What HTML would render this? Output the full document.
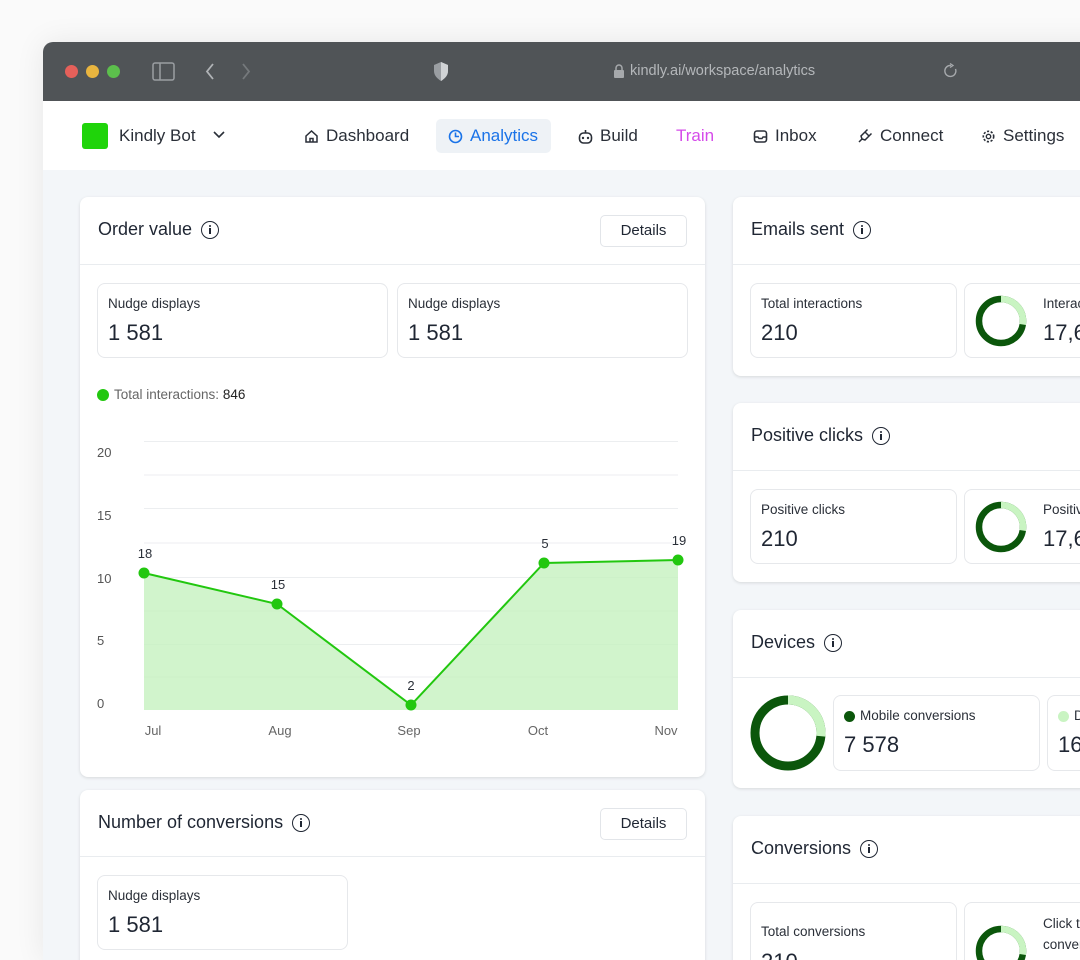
<!DOCTYPE html>
<html><head><meta charset="utf-8"><style>
*{box-sizing:border-box;margin:0;padding:0}
html{width:1080px;height:960px;overflow:hidden}
body{width:1080px;height:960px;overflow:hidden;background:#fafafa;font-family:"Liberation Sans",sans-serif;color:#1f2633;position:relative}
.win{position:absolute;left:43px;top:42px;width:1100px;height:918px;border-radius:10px 0 0 0;overflow:hidden;background:#f3f6f9;box-shadow:0 0 30px rgba(0,0,0,.08)}
.tb{position:absolute;left:0;top:0;right:0;height:59px;background:#505457}
.dot{position:absolute;top:23px;width:13px;height:13px;border-radius:50%}
.nav{position:absolute;left:0;top:59px;right:0;height:69px;background:#fff}
.ni{position:absolute;top:25px;font-size:17px;color:#2a2f38;display:flex;align-items:center;gap:7px}
.card{position:absolute;background:#fff;border-radius:8px;box-shadow:0 1px 3px rgba(0,0,0,.12)}
.ch{height:68px;border-bottom:1px solid #e9ecef;position:relative}
.ct{position:absolute;left:18px;top:22px;font-size:18px;color:#1f2633;display:flex;align-items:center;gap:9px}
.info{width:18px;height:18px;border:1.6px solid #1f2633;border-radius:50%;position:relative;display:inline-block}
.info:before{content:"";position:absolute;left:6.6px;top:3px;width:2px;height:2px;background:#1f2633;border-radius:1px}
.info:after{content:"";position:absolute;left:6.6px;top:6.5px;width:2px;height:6px;background:#1f2633}
.btn{position:absolute;right:18px;top:18px;width:87px;height:32px;border:1px solid #e2e5e9;border-radius:5px;font-size:15px;text-align:center;line-height:30px}
.st{position:absolute;border:1px solid #e6e8eb;border-radius:8px;background:#fff;overflow:hidden}
.sl{position:absolute;left:10px;top:12px;font-size:13.5px;color:#2a2f38}
.sv{position:absolute;left:10px;top:36px;font-size:22px;color:#1f2633}
</style></head><body>
<div class="win">
 <div class="tb">
  <div class="dot" style="left:22px;background:#e5605a"></div>
  <div class="dot" style="left:43px;background:#e9b53f"></div>
  <div class="dot" style="left:64px;background:#5cbf4c"></div>
  <svg style="position:absolute;left:109px;top:20px" width="24" height="19" viewBox="0 0 24 19"><rect x="1" y="1" width="21" height="17" rx="2" fill="none" stroke="#9a9ea2" stroke-width="1.5"/><line x1="8" y1="1" x2="8" y2="18" stroke="#9a9ea2" stroke-width="1.5"/></svg>
  <svg style="position:absolute;left:161px;top:20px" width="12" height="19"><path d="M9 2 L3 9.5 L9 17" fill="none" stroke="#b0b3b6" stroke-width="1.8"/></svg>
  <svg style="position:absolute;left:197px;top:20px" width="12" height="19"><path d="M3 2 L9 9.5 L3 17" fill="none" stroke="#75797c" stroke-width="1.8"/></svg>
  <svg style="position:absolute;left:389px;top:19px" width="18" height="21"><path d="M9 1 L16 4 V10 C16 15 12 18 9 20 C6 18 2 15 2 10 V4 Z" fill="#9a9ea2"/><path d="M9 1 L16 4 V10 C16 15 12 18 9 20 Z" fill="#d0d3d5"/></svg>
  <svg style="position:absolute;left:570px;top:22px" width="12" height="14"><rect x="1" y="6" width="10" height="8" rx="1" fill="#a6a9ac"/><path d="M3 6 V4 a3 3 0 0 1 6 0 V6" fill="none" stroke="#a6a9ac" stroke-width="1.5"/></svg>
  <div style="position:absolute;left:587px;top:21px;font-size:14.5px;color:#b4b7ba">kindly.ai/workspace/analytics</div>
  <svg style="position:absolute;left:900px;top:21px" width="16" height="16"><path d="M12.5 6 A5.5 5.5 0 1 1 8 2.5" fill="none" stroke="#a6a9ac" stroke-width="1.4"/><path d="M7 0.5 L10 2.5 L7 4.5" fill="none" stroke="#a6a9ac" stroke-width="1.3"/></svg>
 </div>
 <div class="nav">
  <div style="position:absolute;left:39px;top:22px;width:26px;height:26px;border-radius:3px;background:#1fd40a"></div>
  <div style="position:absolute;left:76px;top:25px;font-size:17px;color:#2a2f38">Kindly Bot</div>
  <svg style="position:absolute;left:170px;top:30px" width="12" height="8"><path d="M1 1 L6 6 L11 1" fill="none" stroke="#2a2f38" stroke-width="1.6"/></svg>
  <div class="ni" style="left:261px"><svg width="15" height="15"><path d="M2 7 L7.5 2 L13 7 V13 H2 Z M6 13 V9.5 H9 V13" fill="none" stroke="#2a2f38" stroke-width="1.5"/></svg>Dashboard</div>
  <div style="position:absolute;left:393px;top:18px;width:115px;height:34px;border-radius:5px;background:#eef2f6"></div>
  <div class="ni" style="left:405px;color:#1a73e8"><svg width="15" height="15"><circle cx="7.5" cy="7.5" r="6" fill="none" stroke="#1a73e8" stroke-width="1.6"/><path d="M7.5 3.5 V7.5 H11" fill="none" stroke="#1a73e8" stroke-width="1.6"/></svg>Analytics</div>
  <div class="ni" style="left:535px"><svg width="15" height="15"><rect x="1.5" y="4" width="12" height="10" rx="4" fill="none" stroke="#2a2f38" stroke-width="1.6"/><line x1="7.5" y1="1" x2="7.5" y2="4" stroke="#2a2f38" stroke-width="1.6"/><circle cx="5" cy="9" r="1.2" fill="#2a2f38"/><circle cx="10" cy="9" r="1.2" fill="#2a2f38"/></svg>Build</div>
  <div class="ni" style="left:633px;color:#d54bea">Train</div>
  <div class="ni" style="left:710px"><svg width="15" height="15"><rect x="1.5" y="2" width="12" height="11" rx="2.5" fill="none" stroke="#2a2f38" stroke-width="1.6"/><path d="M1.5 8 H5 L6 9.5 H9 L10 8 H13.5" fill="none" stroke="#2a2f38" stroke-width="1.4"/></svg>Inbox</div>
  <div class="ni" style="left:814px"><svg width="16" height="16"><path d="M2 14 L5 11 M5 11 L4 8 L8 4 L12 8 L8 12 Z M8 4 L10.5 1.5 M12 8 L14.5 5.5" fill="none" stroke="#2a2f38" stroke-width="1.5"/></svg>Connect</div>
  <div class="ni" style="left:938px"><svg width="15" height="15"><circle cx="7.5" cy="7.5" r="5.2" fill="none" stroke="#2a2f38" stroke-width="1.6" stroke-dasharray="2.2 1.6"/><circle cx="7.5" cy="7.5" r="2.2" fill="none" stroke="#2a2f38" stroke-width="1.4"/></svg>Settings</div>
 </div>
</div>

<div class="card" style="left:80px;top:197px;width:625px;height:580px">
 <div class="ch"><div class="ct">Order value <span class="info"></span></div><div class="btn">Details</div></div>
 <div class="st" style="left:17px;top:86px;width:291px;height:75px"><div class="sl">Nudge displays</div><div class="sv">1 581</div></div>
 <div class="st" style="left:317px;top:86px;width:291px;height:75px"><div class="sl">Nudge displays</div><div class="sv">1 581</div></div>
 <div style="position:absolute;left:17px;top:192px;width:12px;height:12px;border-radius:50%;background:#22c70f"></div>
 <div style="position:absolute;left:34px;top:190px;font-size:13.5px;color:#666">Total interactions: <span style="color:#222">846</span></div>
</div>
<svg style="position:absolute;left:0;top:0" width="1080" height="960">
 <g stroke="#eceef0" stroke-width="1">
  <line x1="144" y1="441.5" x2="678" y2="441.5"/><line x1="144" y1="475" x2="678" y2="475"/><line x1="144" y1="508.5" x2="678" y2="508.5"/><line x1="144" y1="543" x2="678" y2="543"/><line x1="144" y1="577.5" x2="678" y2="577.5"/><line x1="144" y1="611" x2="678" y2="611"/><line x1="144" y1="644.5" x2="678" y2="644.5"/><line x1="144" y1="677" x2="678" y2="677"/>
 </g>
 <path d="M144 573 L277 604 L411 705 L544 563 L678 560 L678 710 L144 710 Z" fill="#c6f1bf" opacity=".8"/>
 <path d="M144 573 L277 604 L411 705 L544 563 L678 560" fill="none" stroke="#22c70f" stroke-width="2"/>
 <g fill="#22c70f"><circle cx="144" cy="573" r="5.5"/><circle cx="277" cy="604" r="5.5"/><circle cx="411" cy="705" r="5.5"/><circle cx="544" cy="563" r="5.5"/><circle cx="678" cy="560" r="5.5"/></g>
 <g font-family="Liberation Sans" font-size="13" fill="#2a2f38" text-anchor="middle">
  <text x="145" y="558">18</text><text x="278" y="589">15</text><text x="411" y="690">2</text><text x="545" y="548">5</text><text x="679" y="545">19</text>
 </g>
 <g font-family="Liberation Sans" font-size="13" fill="#555">
  <text x="97" y="457">20</text><text x="97" y="520">15</text><text x="97" y="583">10</text><text x="97" y="645">5</text><text x="97" y="708">0</text>
 </g>
 <g font-family="Liberation Sans" font-size="13" fill="#666" text-anchor="middle">
  <text x="153" y="735">Jul</text><text x="280" y="735">Aug</text><text x="409" y="735">Sep</text><text x="538" y="735">Oct</text><text x="666" y="735">Nov</text>
 </g>
</svg>

<div class="card" style="left:80px;top:790px;width:625px;height:200px">
 <div class="ch" style="height:67px"><div class="ct">Number of conversions <span class="info"></span></div><div class="btn">Details</div></div>
 <div class="st" style="left:17px;top:85px;width:251px;height:75px"><div class="sl">Nudge displays</div><div class="sv">1 581</div></div>
</div>

<div class="card" style="left:733px;top:197px;width:400px;height:179px">
 <div class="ch"><div class="ct">Emails sent <span class="info"></span></div></div>
 <div class="st" style="left:17px;top:86px;width:207px;height:75px"><div class="sl">Total interactions</div><div class="sv">210</div></div>
 <div class="st" style="left:231px;top:86px;width:200px;height:75px">
  <svg style="position:absolute;left:9px;top:10px" width="54" height="54"><circle cx="27" cy="27" r="22" fill="none" stroke="#0b560b" stroke-width="6.5"/><circle cx="27" cy="27" r="22" fill="none" stroke="#c9f4c2" stroke-width="6.5" stroke-dasharray="38 200" transform="rotate(-90 27 27)"/></svg>
  <div class="sl" style="left:78px">Interactions</div><div class="sv" style="left:78px">17,6</div></div>
</div>
<div class="card" style="left:733px;top:403px;width:400px;height:179px">
 <div class="ch"><div class="ct">Positive clicks <span class="info"></span></div></div>
 <div class="st" style="left:17px;top:86px;width:207px;height:75px"><div class="sl">Positive clicks</div><div class="sv">210</div></div>
 <div class="st" style="left:231px;top:86px;width:200px;height:75px">
  <svg style="position:absolute;left:9px;top:10px" width="54" height="54"><circle cx="27" cy="27" r="22" fill="none" stroke="#0b560b" stroke-width="6.5"/><circle cx="27" cy="27" r="22" fill="none" stroke="#c9f4c2" stroke-width="6.5" stroke-dasharray="38 200" transform="rotate(-90 27 27)"/></svg>
  <div class="sl" style="left:78px">Positive</div><div class="sv" style="left:78px">17,6</div></div>
</div>
<div class="card" style="left:733px;top:610px;width:400px;height:178px">
 <div class="ch"><div class="ct">Devices <span class="info"></span></div></div>
 <svg style="position:absolute;left:17px;top:85px" width="76" height="76"><circle cx="38" cy="38" r="33" fill="none" stroke="#0b560b" stroke-width="9"/><circle cx="38" cy="38" r="33" fill="none" stroke="#c9f4c2" stroke-width="9" stroke-dasharray="55 300" transform="rotate(-90 38 38)"/></svg>
 <div class="st" style="left:100px;top:85px;width:207px;height:76px"><div style="position:absolute;left:10px;top:15px;width:11px;height:11px;border-radius:50%;background:#0b560b"></div><div class="sl" style="left:26px">Mobile conversions</div><div class="sv">7 578</div></div>
 <div class="st" style="left:314px;top:85px;width:200px;height:76px"><div style="position:absolute;left:10px;top:15px;width:11px;height:11px;border-radius:50%;background:#c9f4c2"></div><div class="sl" style="left:26px">Desktop</div><div class="sv">16</div></div>
</div>
<div class="card" style="left:733px;top:816px;width:400px;height:200px">
 <div class="ch"><div class="ct">Conversions <span class="info"></span></div></div>
 <div class="st" style="left:17px;top:86px;width:207px;height:75px"><div class="sl" style="top:21px">Total conversions</div><div class="sv" style="top:46px">210</div></div>
 <div class="st" style="left:231px;top:86px;width:200px;height:75px">
  <svg style="position:absolute;left:9px;top:21px" width="54" height="54"><circle cx="27" cy="27" r="22" fill="none" stroke="#0b560b" stroke-width="6.5"/><circle cx="27" cy="27" r="22" fill="none" stroke="#c9f4c2" stroke-width="6.5" stroke-dasharray="38 200" transform="rotate(-90 27 27)"/></svg>
  <div class="sl" style="left:78px;top:10px;line-height:21px">Click to<br>conversions</div></div>
</div>
</body></html>
